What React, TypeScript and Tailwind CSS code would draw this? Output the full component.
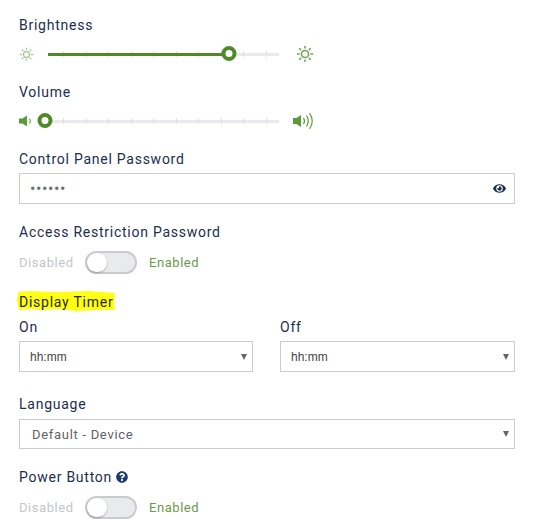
import { FaEye, FaQuestionCircle } from "react-icons/fa";

const TICKS = [0, 1, 2, 3, 4, 5, 6, 7, 8, 9];

function SunIcon({ size, className }: { size: number; className: string }) {
  return (
    <svg width={size} height={size} viewBox="0 0 20 20" className={className} fill="none" stroke="currentColor">
      <circle cx="10" cy="10" r="4" strokeWidth="1.7" />
      <path
        d="M10 1v3M10 16v3M1 10h3M16 10h3M3.6 3.6l2.1 2.1M14.3 14.3l2.1 2.1M3.6 16.4l2.1-2.1M14.3 5.7l2.1-2.1"
        strokeWidth="1.7"
      />
    </svg>
  );
}

function VolumeLow() {
  return (
    <svg width="14" height="12" viewBox="0 0 14 12" className="text-[#5c9a3a]" fill="none">
      <path d="M0 3.5h3.5L8 .5v11L3.500 8.500H0z" fill="currentColor" />
      <path d="M10.500 3.500q1.700 2.500 0 5" stroke="currentColor" strokeWidth="1.200" opacity="0.8" />
    </svg>
  );
}

function VolumeHigh() {
  return (
    <svg width="22" height="18" viewBox="0 0 22 18" className="text-[#5c9a3a]" fill="none">
      <path d="M0 6h3.500L8 3v12l-4.500-3H0z" fill="currentColor" />
      <path d="M10.500 6q2 3 0 6" stroke="currentColor" strokeWidth="1.200" />
      <path d="M13.500 3.500q3.600 5.500 0 11" stroke="currentColor" strokeWidth="1.200" />
      <path d="M16.500 1q5.500 8 0 16" stroke="currentColor" strokeWidth="1.200" />
    </svg>
  );
}

function Slider({ value }: { value: number }) {
  return (
    <div className="relative flex h-[14px] w-[231px] items-center">
      <div className="h-[3px] w-full bg-[#e8eaed]" />
      <div className="absolute left-[15px] right-[12px] top-[4px] flex justify-between">
        {TICKS.map((t) => (
          <div key={t} className="h-[6px] w-px bg-[#dcdfe3]" />
        ))}
      </div>
      {value > 0 && <div className="absolute left-0 top-[6px] h-[3px] bg-[#4f8a27]" style={{ width: value }} />}
      <div
        className="absolute top-[-1px] h-[15px] w-[15px] -translate-x-1/2 rounded-full border-[4px] border-[#4f8a27] bg-white"
        style={{ left: value }}
      />
    </div>
  );
}

function Toggle() {
  return (
    <div className="flex h-[23px] items-center text-[13px] tracking-[0.55px]">
      <span className="w-[66px] text-[#c4c6c9]">Disabled</span>
      <div className="flex h-[23px] w-[52px] items-center rounded-full border-2 border-[#c9cbce] bg-[#e8eaed]">
        <div className="h-[19px] w-[20px] rounded-full bg-white shadow-[0_1px_2px_rgba(0,0,0,0.25)]" />
      </div>
      <span className="ml-[12px] text-[#6b9a4a]">Enabled</span>
    </div>
  );
}

function TimeSelect() {
  return (
    <div className="flex h-[31px] items-center justify-between border border-[#cccccc] bg-white pl-[10px] pr-[5px]">
      <span className="font-['Liberation_Sans',sans-serif] text-[12px] tracking-normal text-[#444444]">hh:mm</span>
      <span className="h-0 w-0 border-x-[3px] border-t-[6px] border-x-transparent border-t-[#666666]" />
    </div>
  );
}

export default function App() {
  return (
    <div className="h-[527px] w-[537px] overflow-hidden bg-white pl-[19px] pr-[22px] pt-[15px] font-['Roboto',sans-serif] text-[14px] tracking-[0.75px] text-[#1d2d50]">
      <div className="h-[20px] leading-[20px]">Brightness</div>
      <div className="mt-[12px] flex h-[14px] items-center">
        <div className="w-[29px]">
          <SunIcon size={15} className="text-[#a9c99a]" />
        </div>
        <Slider value={181} />
        <div className="ml-[17px]">
          <SunIcon size={18} className="text-[#6fa450]" />
        </div>
      </div>

      <div className="mt-[21px] h-[20px] leading-[20px]">Volume</div>
      <div className="mt-[12px] flex h-[14px] items-center">
        <div className="w-[29px]">
          <VolumeLow />
        </div>
        <Slider value={-3} />
        <div className="ml-[14px]">
          <VolumeHigh />
        </div>
      </div>

      <div className="mt-[21px] h-[20px] leading-[20px]">Control Panel Password</div>
      <div className="mt-[4px] flex h-[31px] items-center justify-between border border-[#cccccc] bg-white pl-[10px] pr-[8px]">
        <span className="text-[16px] tracking-[0.6px] text-[#6b6f75]">••••••</span>
        <FaEye className="text-[13px] text-[#1d2d50]" />
      </div>

      <div className="mt-[18px] h-[20px] leading-[20px]">Access Restriction Password</div>
      <div className="mt-[9px]">
        <Toggle />
      </div>

      <div className="relative mt-[18px] h-[20px] leading-[20px]">
        <svg
          width="100"
          height="22"
          viewBox="0 0 100 22"
          className="absolute left-[-2px] top-[-2px] text-[#ffff14]"
          fill="currentColor"
        >
          <path d="M1 2 L12 1 L40 2 L72 1 L98 3 L97 14 L98 20 L80 20 L60 21 L40 19 L25 20 L12 19 L2 20 L0 11Z" />
        </svg>
        <span className="relative text-[#2a2a14]">Display Timer</span>
      </div>

      <div className="mt-[5px] grid grid-cols-[234px_235px] gap-x-[27px]">
        <div>
          <div className="h-[20px] leading-[20px]">On</div>
          <div className="mt-[4px]">
            <TimeSelect />
          </div>
        </div>
        <div>
          <div className="h-[20px] leading-[20px]">Off</div>
          <div className="mt-[4px]">
            <TimeSelect />
          </div>
        </div>
      </div>

      <div className="mt-[22px] h-[20px] leading-[20px]">Language</div>
      <div className="mt-[5px] flex h-[30px] items-center justify-between border border-[#cccccc] bg-white pl-[12px] pr-[5px]">
        <span className="pt-px text-[13px] tracking-[0.7px] text-[#5f6368]">Default - Device</span>
        <span className="h-0 w-0 border-x-[3px] border-t-[6px] border-x-transparent border-t-[#666666]" />
      </div>

      <div className="mt-[18px] flex h-[20px] items-center leading-[20px]">
        Power Button
        <FaQuestionCircle className="ml-[4px] text-[12px] text-[#1d3a6b]" />
      </div>
      <div className="mt-[9px]">
        <Toggle />
      </div>
    </div>
  );
}
